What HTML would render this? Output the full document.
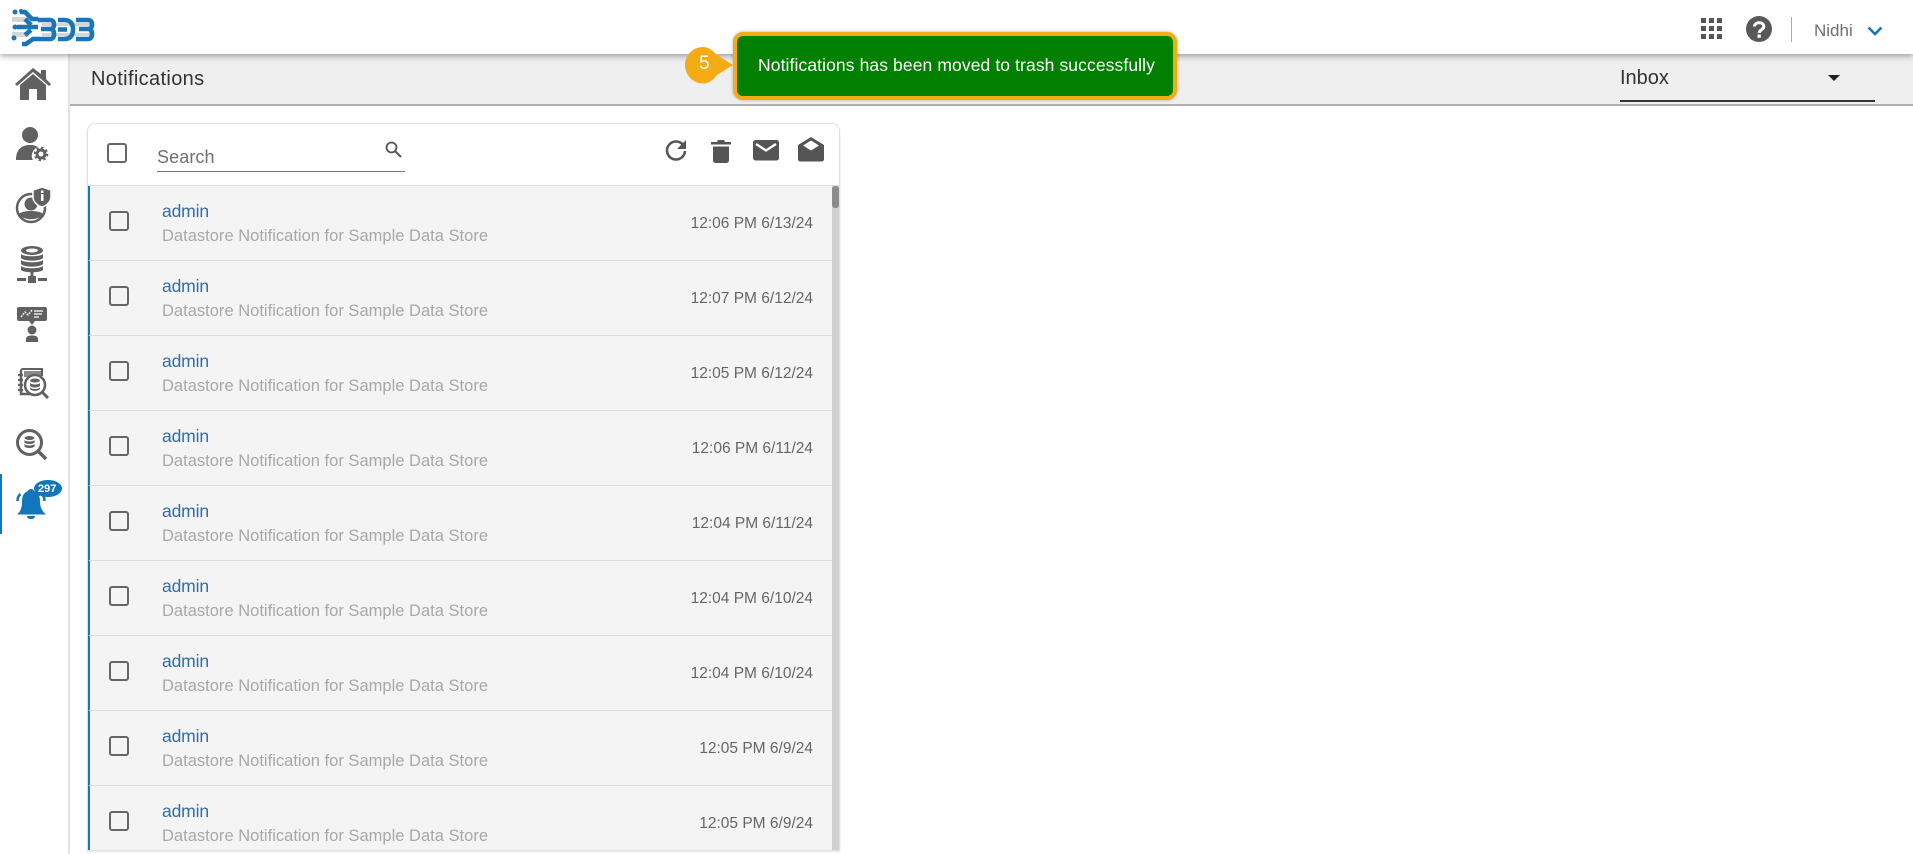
<!DOCTYPE html>
<html><head><meta charset="utf-8"><title>Notifications</title>
<style>
html,body{margin:0;padding:0;width:1913px;height:854px;overflow:hidden;background:#fff;font-family:"Liberation Sans",sans-serif}
div,svg,span{position:absolute;box-sizing:border-box}
.t{white-space:nowrap}
.row{left:88px;width:744px;height:75px;background:#f4f4f4;border-left:2px solid #1a76b8;border-bottom:1px solid #ddd}
.cb{left:19px;top:25px;width:20px;height:20px;border:2px solid #666;border-radius:3px}
.ad{left:72px;top:13.500px;font-size:17.500px;line-height:22px;color:#2f6ea8;letter-spacing:-.15px}
.ds{left:72px;top:40px;font-size:16.500px;line-height:20px;color:#a8a8a8;letter-spacing:.01px}
.tm{right:19px;top:28px;font-size:15.500px;line-height:20px;color:#666}
</style></head><body>

<div style="left:0;top:54px;width:70px;height:800px;background:#fff;border-right:2px solid #e2e2e2"></div>
<div style="left:70px;top:54px;width:1843px;height:52px;background:#efefef;border-bottom:2px solid #b0b0b0"></div>
<div style="left:0;top:0;width:1913px;height:54px;background:#fff;box-shadow:0 2px 6px rgba(0,0,0,.35)"></div>

<svg style="left:0;top:0" width="100" height="54" viewBox="0 0 100 54">
<g fill="#d6d6d6"><rect x="12" y="17" width="17" height="5"/><rect x="12" y="32" width="17" height="5"/><rect x="42" y="23" width="50" height="3"/><rect x="42" y="33" width="50" height="3"/></g>
<g fill="none" stroke="#1a76b8" stroke-width="4.600">
<path d="M20 12H25L32 19H38"/><path d="M17 27H38"/><path d="M22 44H26L33 39H38"/><path d="M25 19L31 25"/><path d="M25 35L31 30"/>
<path d="M38 20H50Q54 20 54 24.500Q54 29 50 29H41M50 29Q54 29 54 34Q54 39 50 39H38"/>
<path d="M58 20H64Q73 20 73 29.500Q73 39 64 39H58M58 29.500H67"/>
<path d="M76 20H88Q92 20 92 24.500Q92 29 88 29H79M88 29Q92 29 92 34Q92 39 88 39H76"/></g>
<g fill="#1a76b8"><circle cx="15" cy="12" r="2.500"/><circle cx="21" cy="11" r="2"/><circle cx="14" cy="38" r="2.500"/><circle cx="15" cy="27" r="2.500"/></g>
</svg>

<svg style="left:1701px;top:18px" width="22" height="22" viewBox="0 0 22 22" fill="#555"><path d="M0 0h5v5H0zM8 0h5v5H8zM16 0h5v5h-5zM0 8h5v5H0zM8 8h5v5H8zM16 8h5v5h-5zM0 16h5v5H0zM8 16h5v5H8zM16 16h5v5h-5z"/></svg>
<svg style="left:1746px;top:16px" width="26" height="26" viewBox="0 0 26 26"><circle cx="13" cy="13" r="13" fill="#595959"/><path d="M8.500 10.500C8.500 5.500 17.800 5.500 17.800 10.500C17.800 13.800 13.200 13.500 13.200 17" fill="none" stroke="#fff" stroke-width="3"/><rect x="11.500" y="18.500" width="3.300" height="3.300" fill="#fff"/></svg>
<div style="left:1791px;top:17px;width:1px;height:25px;background:#aaa"></div>
<div class="t" style="left:1814px;top:20px;font-size:17px;line-height:22px;color:#707070">Nidhi</div>
<svg style="left:1867px;top:26px" width="16" height="10" viewBox="0 0 16 10"><path d="M1.500 1.500L8 8L14.500 1.500" fill="none" stroke="#1a76b8" stroke-width="2.600"/></svg>

<div class="t" style="left:91px;top:67px;font-size:20px;line-height:24px;color:#333;letter-spacing:.35px">Notifications</div>
<div class="t" style="left:1620px;top:66px;font-size:20px;line-height:24px;color:#333">Inbox</div>
<div style="left:1828px;top:75px;width:0;height:0;border-left:6px solid transparent;border-right:6px solid transparent;border-top:6px solid #222"></div>
<div style="left:1620px;top:100px;width:255px;height:2px;background:#333"></div>

<!-- toast -->
<svg style="left:685px;top:47px" width="50" height="37" viewBox="0 0 50 37"><path d="M18 0C24 0 28 4 32 8L48 18L32 28C28 33 24 36.500 18 36.500C8 36.500 0 28 0 18C0 8 8 0 18 0Z" fill="#f5ab14"/></svg>
<div class="t" style="left:699px;top:52px;font-size:19px;line-height:24px;color:#fff">5</div>
<div style="left:733px;top:32px;width:444px;height:68px;background:#028002;border:4px solid #f5ab14;border-radius:10px;box-shadow:0 0 3px rgba(0,0,0,.3)"></div>
<div class="t" style="left:758px;top:54px;font-size:17.500px;line-height:22px;color:#fff;letter-spacing:.1px">Notifications has been moved to trash successfully</div>

<!-- sidebar icons -->
<svg style="left:15px;top:68px" width="36" height="32" viewBox="0 0 36 32" fill="#616161">
<path d="M18 0L26 6V2H31V11L36 16L34 18L18 4L2 18L0 16Z"/><path d="M5 17L18 6L31 17V32H22V21H14V32H5Z"/></svg>
<svg style="left:15px;top:127px" width="36" height="36" viewBox="0 0 36 36" fill="#616161">
<circle cx="15" cy="8" r="8"/><path d="M1 33C1 23 6 18 15 18C19 18 21 19 23 20C18 22 15 28 18 33Z"/>
<circle cx="26" cy="27" r="4" fill="none" stroke="#616161" stroke-width="3"/><circle cx="26" cy="27" r="6" fill="none" stroke="#616161" stroke-width="2.500" stroke-dasharray="2.200 2.510"/></svg>
<svg style="left:15px;top:186px" width="36" height="38" viewBox="0 0 36 38">
<circle cx="16" cy="22" r="14" fill="none" stroke="#616161" stroke-width="2.500"/><circle cx="16" cy="18" r="6.500" fill="#616161"/><path d="M4 28C7 24 25 24 28 28C24 35 8 35 4 28Z" fill="#616161"/>
<path d="M27 1L36 4V11C36 16 31 20 27 21C23 20 18 16 18 11V4Z" fill="#616161" stroke="#fff" stroke-width="1.500"/><rect x="26" y="8" width="2.500" height="7" fill="#fff"/><rect x="26" y="4.500" width="2.500" height="2.500" fill="#fff"/></svg>
<svg style="left:16px;top:246px" width="32" height="38" viewBox="0 0 32 38" fill="#616161">
<ellipse cx="16" cy="4.500" rx="11" ry="4.500"/><ellipse cx="16" cy="4.500" rx="6" ry="2" fill="#fff"/>
<path d="M5 8C8 11 24 11 27 8V12C24 15.500 8 15.500 5 12ZM5 14C8 17 24 17 27 14V18C24 21.500 8 21.500 5 18ZM5 20C8 23 24 23 27 20V24C24 27 8 27 5 24Z"/>
<rect x="14.500" y="26" width="3" height="6"/><rect x="12" y="30" width="8" height="7"/><rect x="1" y="32" width="9" height="3"/><rect x="22" y="32" width="9" height="3"/></svg>
<svg style="left:17px;top:306px" width="30" height="36" viewBox="0 0 30 36" fill="#616161">
<path d="M2 1H28Q30 1 30 3V13Q30 15 28 15H18L15 19L12 15H2Q0 15 0 13V3Q0 1 2 1Z"/>
<path d="M4 11L8 6L11 9L15 4" fill="none" stroke="#fff" stroke-width="1.300" stroke-dasharray="2 1"/><path d="M17 5H26M17 8H25M17 11H22" stroke="#fff" stroke-width="1.200"/>
<circle cx="15" cy="24" r="4.500"/><path d="M9 36V33C9 30 12 29.500 15 29.500C18 29.500 21 30 21 33V36Z"/></svg>
<svg style="left:16px;top:368px" width="34" height="32" viewBox="0 0 34 32">
<path d="M5 3C5 1 6 1 7 1H26V8" fill="none" stroke="#616161" stroke-width="2"/><path d="M5 3V26H14" fill="none" stroke="#616161" stroke-width="2.500"/>
<path d="M2 7H7M2 12H7M2 17H7M2 22H7" stroke="#616161" stroke-width="2.200"/><rect x="8" y="3" width="17" height="6" fill="#8a8a8a"/>
<circle cx="19" cy="17" r="10" fill="#fff" stroke="#616161" stroke-width="2.500"/><ellipse cx="19" cy="12.500" rx="5" ry="2" fill="#616161"/><path d="M14 15C16 17 22 17 24 15V18C22 20 16 20 14 18ZM14 19.500C16 21.500 22 21.500 24 19.500V21C22 23.500 16 23.500 14 21Z" fill="#616161"/>
<path d="M26 24L32 30" stroke="#616161" stroke-width="3"/></svg>
<svg style="left:16px;top:429px" width="32" height="31" viewBox="0 0 32 31" fill="#616161">
<circle cx="13.500" cy="13.500" r="12" fill="none" stroke="#616161" stroke-width="3"/><ellipse cx="13.500" cy="9" rx="5" ry="2"/><path d="M8.500 11C10 13 17 13 18.500 11V13.500C17 15.500 10 15.500 8.500 13.500ZM8.500 15C10 17 17 17 18.500 15V17.500C17 19.500 10 19.500 8.500 17.500Z"/>
<path d="M22 22L30 30" stroke="#616161" stroke-width="3.500"/></svg>
<div style="left:0;top:474px;width:2px;height:60px;background:#1a76b8"></div>
<svg style="left:15px;top:487px" width="34" height="33" viewBox="0 0 34 33" fill="#1176bc">
<path d="M16 2C17.500 2 19 3 19 4C24 6 25 10 25 15C25 20 27 24 31 27.500H2C6 24 7 20 7 15C7 10 8 6 13 4C13 3 14.500 2 16 2Z"/><path d="M12 29H20C20 31.500 18 32 16 32C14 32 12 31.500 12 29Z"/>
<path d="M2.500 14C2.500 11 3.500 8.500 5.500 7M29.500 14C29.500 11 28.500 8.500 26.500 7" fill="none" stroke="#1176bc" stroke-width="2.500"/></svg>
<svg style="left:33px;top:480px" width="29" height="19" viewBox="0 0 29 19"><ellipse cx="15" cy="8.500" rx="14" ry="8.500" fill="#1176bc"/><path d="M4 12L1 18L9 15Z" fill="#1176bc"/></svg>
<div class="t" style="left:38px;top:482px;font-size:11px;line-height:14px;font-weight:bold;color:#fff">297</div>

<!-- card -->
<div style="left:87px;top:123px;width:753px;height:728px;background:#fff;border:1px solid #e0e0e0;border-radius:8px 8px 0 0;box-shadow:0 1px 2px rgba(0,0,0,.1)"></div>
<div style="left:88px;top:185px;width:751px;height:1px;background:#ddd"></div>
<div style="left:107px;top:143px;width:20px;height:20px;border:2px solid #666;border-radius:3px"></div>
<div class="t" style="left:157px;top:146px;font-size:18px;line-height:22px;color:#707070;letter-spacing:.1px">Search</div>
<div style="left:157px;top:171px;width:248px;height:1px;background:#777"></div>
<svg style="left:384px;top:140px" width="19" height="19" viewBox="0 0 19 19"><circle cx="7.500" cy="7.500" r="5" fill="none" stroke="#555" stroke-width="1.800"/><path d="M11.500 11.500L17 17" stroke="#555" stroke-width="2"/></svg>
<svg style="left:665px;top:139px" width="22" height="22" viewBox="0 0 22 22"><path d="M18.500 6.500A9 9 0 1 0 20 12" fill="none" stroke="#555" stroke-width="2.500"/><path d="M21 1V10H12Z" fill="#555"/></svg>
<svg style="left:711px;top:139px" width="20" height="24" viewBox="0 0 20 24" fill="#555"><path d="M0 3H6L7 1H13L14 3H20V5.500H0Z"/><path d="M2 7.500H18V21Q18 24 15 24H5Q2 24 2 21Z"/></svg>
<svg style="left:753px;top:140px" width="26" height="21" viewBox="0 0 26 21"><rect x="0" y="0" width="26" height="20.500" rx="2.500" fill="#555"/><path d="M3 4L13 10.500L23 4" fill="none" stroke="#fff" stroke-width="2.300"/></svg>
<svg style="left:798px;top:137px" width="26" height="25" viewBox="0 0 26 25"><path d="M13 0L26 8V22Q26 24.500 23.500 24.500H2.500Q0 24.500 0 22V8Z" fill="#555"/><path d="M5 8.500L13 3.500L21 8.500L13 13.500Z" fill="#fff"/></svg>

<!-- rows -->
<div class="row" style="top:186px"><div class="cb"></div><div class="t ad">admin</div><div class="t ds">Datastore Notification for Sample Data Store</div><div class="t tm">12:06 PM 6/13/24</div></div>
<div class="row" style="top:261px"><div class="cb"></div><div class="t ad">admin</div><div class="t ds">Datastore Notification for Sample Data Store</div><div class="t tm">12:07 PM 6/12/24</div></div>
<div class="row" style="top:336px"><div class="cb"></div><div class="t ad">admin</div><div class="t ds">Datastore Notification for Sample Data Store</div><div class="t tm">12:05 PM 6/12/24</div></div>
<div class="row" style="top:411px"><div class="cb"></div><div class="t ad">admin</div><div class="t ds">Datastore Notification for Sample Data Store</div><div class="t tm">12:06 PM 6/11/24</div></div>
<div class="row" style="top:486px"><div class="cb"></div><div class="t ad">admin</div><div class="t ds">Datastore Notification for Sample Data Store</div><div class="t tm">12:04 PM 6/11/24</div></div>
<div class="row" style="top:561px"><div class="cb"></div><div class="t ad">admin</div><div class="t ds">Datastore Notification for Sample Data Store</div><div class="t tm">12:04 PM 6/10/24</div></div>
<div class="row" style="top:636px"><div class="cb"></div><div class="t ad">admin</div><div class="t ds">Datastore Notification for Sample Data Store</div><div class="t tm">12:04 PM 6/10/24</div></div>
<div class="row" style="top:711px"><div class="cb"></div><div class="t ad">admin</div><div class="t ds">Datastore Notification for Sample Data Store</div><div class="t tm">12:05 PM 6/9/24</div></div>
<div class="row" style="top:786px;height:64px;border-bottom:0"><div class="cb"></div><div class="t ad">admin</div><div class="t ds">Datastore Notification for Sample Data Store</div><div class="t tm">12:05 PM 6/9/24</div></div>
<div style="left:832px;top:186px;width:7px;height:664px;background:#d2d2d2"></div>
<div style="left:832px;top:186px;width:7px;height:22px;background:#8b8b8b;border-radius:3px"></div>
</body></html>
